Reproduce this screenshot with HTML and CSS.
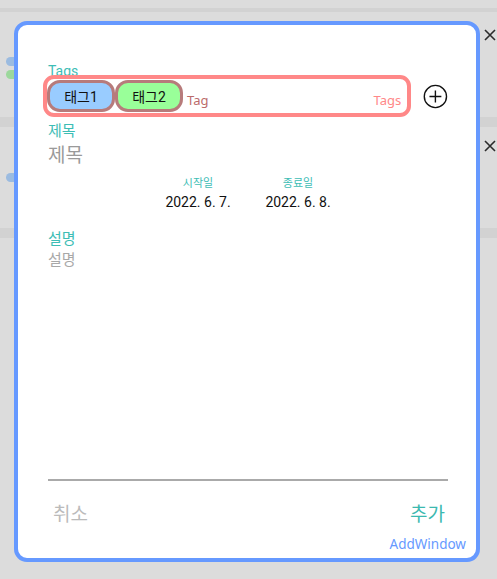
FILE: index.html
```html
<!DOCTYPE html>
<html lang="ko">
<head>
<meta charset="utf-8">
<link rel="stylesheet" href="styles.css">
</head>
<body>
<div class="page">
  <div class="bg-list">
    <div class="sep sep-top"></div>
    <div class="item">
      <div class="dots"><span class="dot blue"></span><span class="dot green"></span></div>
      <svg class="close" width="12" height="12" viewBox="0 0 12 12"><path d="M1 1L11 11M11 1L1 11" stroke="#2b2b2b" stroke-width="1.6" fill="none"/></svg>
    </div>
    <div class="sep"></div>
    <div class="item">
      <div class="dots"><span class="dot blue"></span></div>
      <svg class="close" width="12" height="12" viewBox="0 0 12 12"><path d="M1 1L11 11M11 1L1 11" stroke="#2b2b2b" stroke-width="1.6" fill="none"/></svg>
    </div>
    <div class="sep"></div>
  </div>

  <div class="modal">
    <div class="tags-label">Tags</div>
    <div class="tag-row">
      <div class="tag-box">
        <span class="chip chip-blue">태그1</span>
        <span class="chip chip-green">태그2</span>
        <span class="tag-placeholder">Tag</span>
        <span class="tag-legend">Tags</span>
      </div>
      <svg class="plus" width="25" height="25" viewBox="0 0 25 25"><circle cx="12.5" cy="12.5" r="11.2" stroke="#111" stroke-width="1.4" fill="none"/><path d="M12.5 6.5V18.5M6.5 12.5H18.5" stroke="#111" stroke-width="1.4"/></svg>
    </div>

    <div class="label title-label">제목</div>
    <div class="title-value">제목</div>

    <div class="dates">
      <div class="date-col">
        <div class="date-label">시작일</div>
        <div class="date-value">2022. 6. 7.</div>
      </div>
      <div class="date-col">
        <div class="date-label">종료일</div>
        <div class="date-value">2022. 6. 8.</div>
      </div>
    </div>

    <div class="label desc-label">설명</div>
    <div class="desc-value">설명</div>

    <div class="spacer"></div>
    <div class="divider"></div>
    <div class="actions">
      <span class="cancel">취소</span>
      <span class="add">추가</span>
    </div>
    <div class="window-name">AddWindow</div>
  </div>
</div>
</body>
</html>
```

FILE: styles.css
```css
html, body {
  margin: 0;
  padding: 0;
}
body {
  background: #dcdcdc;
  font-family: "Roboto", "Noto Sans CJK KR", sans-serif;
}
.page {
  position: relative;
  width: 497px;
  height: 579px;
  overflow: hidden;
  background: #dcdcdc;
}
.bg-list {
  padding-top: 8px;
  background: #dcdcdc;
}
.bg-list .sep {
  height: 10px;
  background: #d2d2d2;
}
.bg-list .sep-top {
  height: 4px;
}
.item {
  height: 105px;
  display: flex;
  justify-content: space-between;
  align-items: flex-start;
}
.item + .sep + .item {
  height: 101px;
}
.dots {
  display: flex;
  flex-direction: column;
  gap: 4px;
  padding: 45px 0 0 6px;
}
.item + .sep + .item .dots {
  padding-top: 46px;
}
.dot {
  width: 12px;
  height: 9px;
  border-radius: 5px;
  display: block;
}
.dot.blue { background: #9bbbe0; }
.dot.green { background: #9cd89c; }
.close {
  margin: 17px 1px 0 0;
}
.item + .sep + .item .close {
  margin-top: 13px;
}

.modal {
  position: absolute;
  left: 14px;
  top: 21px;
  width: 400px;
  height: 533px;
  border: 4px solid #6699ff;
  border-radius: 13px;
  background: #ffffff;
  padding: 0 28px 0 30px;
  box-sizing: content-box;
  display: flex;
  flex-direction: column;
}
.tags-label {
  margin-top: 39px;
  font-size: 14px;
  line-height: 15px;
  color: #3dbdb5;
}
.tag-row {
  display: flex;
  align-items: center;
  margin-top: -4px;
  margin-left: -5px;
  gap: 12px;
}
.tag-box {
  position: relative;
  width: 363px;
  height: 34px;
  border: 4px solid #ff8888;
  border-radius: 11px;
  background: #fff;
  display: flex;
  align-items: flex-start;
}
.chip {
  box-sizing: border-box;
  width: 68px;
  height: 32px;
  margin-top: 1px;
  border: 3px solid #b77b7b;
  border-radius: 13px;
  display: flex;
  align-items: center;
  justify-content: center;
  font-family: "Roboto", "Noto Sans CJK KR", sans-serif;
  font-size: 14px;
  color: #111;
}
.chip-blue { background: #99ccff; }
.chip-green { background: #99ff99; }
.tag-placeholder {
  align-self: flex-end;
  margin-left: 4px;
  margin-bottom: 5px;
  font-family: "Noto Sans", sans-serif;
  font-size: 13px;
  line-height: 15px;
  color: #bb6b6b;
}
.tag-legend {
  align-self: flex-end;
  margin-left: auto;
  margin-right: 6px;
  margin-bottom: 5px;
  font-family: "Noto Sans", sans-serif;
  font-size: 13px;
  line-height: 15px;
  color: #ff8888;
}
.plus {
  display: block;
}
.label {
  font-family: "Noto Sans CJK KR", sans-serif;
  font-size: 15px;
  line-height: 18px;
  color: #3dbdb5;
}
.title-label {
  margin-top: 4px;
}
.title-value {
  margin-top: 3px;
  font-family: "Noto Sans CJK KR", sans-serif;
  font-size: 19px;
  line-height: 24px;
  color: #9a9a9a;
}
.dates {
  display: flex;
  justify-content: center;
  margin-top: 9px;
}
.date-col {
  width: 100px;
  display: flex;
  flex-direction: column;
  align-items: center;
}
.date-label {
  font-family: "Noto Sans CJK KR", sans-serif;
  font-size: 11px;
  line-height: 14px;
  color: #3dbdb5;
}
.date-value {
  margin-top: 5px;
  font-family: "Roboto", sans-serif;
  font-size: 14px;
  line-height: 16px;
  color: #111;
}
.desc-label {
  margin-top: 19px;
}
.desc-value {
  margin-top: 2px;
  font-family: "Noto Sans CJK KR", sans-serif;
  font-size: 15px;
  line-height: 20px;
  color: #a8a8a8;
}
.spacer {
  flex: 1;
}
.divider {
  height: 2px;
  background: #aaaaaa;
}
.actions {
  display: flex;
  justify-content: space-between;
  padding: 0 3px 0 5px;
  margin-top: 20px;
  font-family: "Noto Sans CJK KR", sans-serif;
  font-size: 19px;
  line-height: 24px;
}
.cancel { color: #bbbbbb; }
.add { color: #3bb9b0; }
.window-name {
  align-self: flex-end;
  margin-right: -18px;
  margin-top: 11px;
  margin-bottom: 6px;
  font-family: "Noto Sans", sans-serif;
  font-size: 13.5px;
  line-height: 16px;
  color: #6699ff;
}
```
